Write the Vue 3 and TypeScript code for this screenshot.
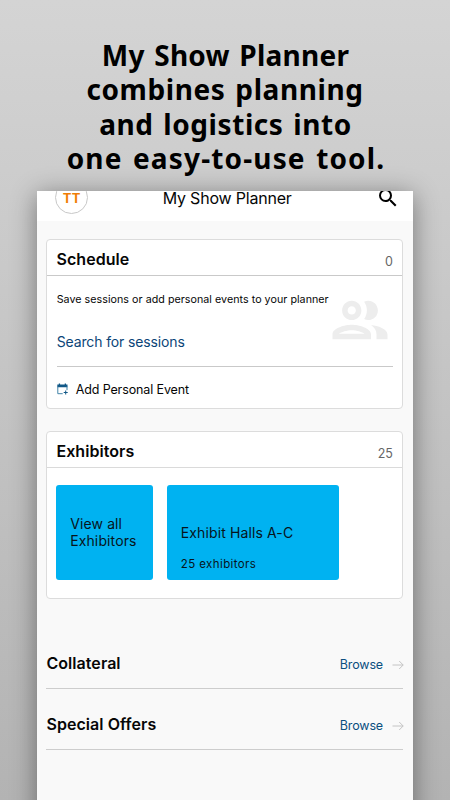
<script setup lang="ts">
interface LinkRow {
  title: string
  action: string
}

const headline: string[] = [
  'My Show Planner',
  'combines planning',
  'and logistics into',
  'one easy-to-use tool.',
]

const rows: LinkRow[] = [
  { title: 'Collateral', action: 'Browse' },
  { title: 'Special Offers', action: 'Browse' },
]
</script>

<template>
  <main class="promo">
    <h1 class="headline">
      <span v-for="(line, i) in headline" :key="line" :class="['line', `line-${i + 1}`]">{{ line }}</span>
    </h1>

    <div class="device">
      <div class="screen">
        <header class="topbar">
          <div class="avatar"><span>TT</span></div>
          <div class="title">My Show Planner</div>
          <svg class="search" viewBox="0 0 24 24" aria-hidden="true">
            <path d="M15.5 14h-.79l-.28-.27A6.471 6.471 0 0 0 16 9.5 6.5 6.5 0 1 0 9.5 16c1.61 0 3.09-.59 4.23-1.57l.27.28v.79l5 4.99L20.49 19l-4.99-5zm-6 0C7.01 14 5 11.99 5 9.5S7.01 5 9.5 5 14 7.01 14 9.5 11.99 14 9.5 14z" />
          </svg>
        </header>

        <section class="card schedule">
          <div class="card-head">
            <h2>Schedule</h2>
            <span class="count">0</span>
          </div>
          <div class="card-body">
            <p class="hint">Save sessions or add personal events to your planner</p>
            <a class="session-link">Search for sessions</a>
            <svg class="people" viewBox="0 0 24 24" aria-hidden="true">
              <path d="M9 13.75c-2.34 0-7 1.17-7 3.5V19h14v-1.75c0-2.33-4.66-3.5-7-3.5zM4.34 17c.84-.58 2.87-1.25 4.66-1.25s3.82.67 4.66 1.25H4.34zM9 12c1.93 0 3.5-1.57 3.5-3.5S10.93 5 9 5 5.5 6.57 5.5 8.5 7.07 12 9 12zm0-5c.83 0 1.5.67 1.5 1.5S9.83 10 9 10s-1.5-.67-1.5-1.5S8.17 7 9 7zm7.04 6.81c1.16.84 1.96 1.96 1.96 3.44V19h4v-1.75c0-2.02-3.5-3.17-5.96-3.44zM15 12c1.93 0 3.5-1.57 3.5-3.5S16.93 5 15 5c-.54 0-1.04.13-1.5.35.63.89 1 1.98 1 3.15s-.37 2.26-1 3.15c.46.22.96.35 1.5.35z" />
            </svg>
            <div class="add-event">
              <svg class="calendar" viewBox="0 0 11 12" aria-hidden="true">
                <path class="cal-fill" d="M.3 1.6h10.2v2.7H.3zM1.8.4h1.3v1.5H1.8zM7.7.4H9v1.5H7.7zM8.2 7.4h1v1.5h1.5v1H9.2v1.5h-1V9.9H6.7v-1h1.5z" />
                <path class="cal-line" d="M.8 3.5v7.2h4.9M10 3.5v3.6" />
              </svg>
              <span>Add Personal Event</span>
            </div>
          </div>
        </section>

        <section class="card exhibitors">
          <div class="card-head">
            <h2>Exhibitors</h2>
            <span class="count">25</span>
          </div>
          <div class="tiles">
            <div class="tile all"><span>View all<br />Exhibitors</span></div>
            <div class="tile hall">
              <span class="hall-name">Exhibit Halls A-C</span>
              <span class="hall-count">25 exhibitors</span>
            </div>
          </div>
        </section>

        <section class="links">
          <div v-for="row in rows" :key="row.title" class="link-row">
            <h2>{{ row.title }}</h2>
            <a>{{ row.action }}</a>
            <svg class="arrow" viewBox="0 0 12 10" aria-hidden="true">
              <path d="M.5 5h10.7M7.2 1l4 4-4 4" />
            </svg>
          </div>
        </section>
      </div>
    </div>
  </main>
</template>

<style>
body {
  margin: 0;
}
</style>

<style scoped>
.promo {
  box-sizing: border-box;
  width: 450px;
  height: 800px;
  overflow: hidden;
  padding-top: 38px;
  background: linear-gradient(#d4d4d4, #b3b3b3);
  font-family: Inter, 'Liberation Sans', sans-serif;
  color: #060606;
}
h1,
h2,
p {
  margin: 0;
}
.headline {
  display: flex;
  flex-direction: column;
  align-items: center;
  height: 153.3px;
  font: 700 28px/34.3px 'Noto Sans', 'Open Sans', sans-serif;
  word-spacing: 2px;
  color: #000;
  white-space: nowrap;
}
.line-1 {
  padding-left: 1px;
  letter-spacing: 0.25px;
}
.line-2 {
  letter-spacing: 0.6px;
}
.line-3 {
  padding-left: 1px;
  letter-spacing: 0.57px;
}
.line-4 {
  padding-left: 2px;
  letter-spacing: 1.15px;
}
.device {
  width: 375.4px;
  height: 640px;
  margin-left: 37.3px;
  box-shadow: 0 4px 24px rgba(0, 0, 0, 0.42);
}
.screen {
  display: flex;
  flex-direction: column;
  height: 100%;
  overflow: hidden;
  background: #f9f9f9;
}
.topbar {
  display: flex;
  flex: none;
  align-items: flex-start;
  justify-content: space-between;
  box-sizing: border-box;
  height: 47.7px;
  padding: 0 12.7px 0 18px;
  background: linear-gradient(#fff 30px, #f9f9f9 30px);
}
.avatar {
  box-sizing: border-box;
  width: 33px;
  height: 33px;
  margin-top: -10.3px;
  border: 1px solid #c8c8c8;
  border-radius: 50%;
  text-align: center;
  font-weight: 700;
  font-size: 13px;
  line-height: 32px;
  letter-spacing: 0.3px;
  color: #f07d05;
}
.title {
  margin-right: 10px;
  font-size: 16px;
  line-height: 14px;
  letter-spacing: -0.2px;
}
.search {
  width: 24px;
  height: 24px;
  margin-top: -5.3px;
}
.card {
  box-sizing: border-box;
  flex: none;
  width: 357px;
  margin-left: 9.2px;
  border: 1px solid #dcdcdc;
  border-radius: 4px;
  background: #fff;
}
.schedule {
  height: 169.7px;
}
.exhibitors {
  height: 168px;
  margin-top: 22.5px;
}
.card-head {
  display: flex;
  align-items: center;
  justify-content: space-between;
  box-sizing: border-box;
  height: 36px;
  padding: 2px 9.5px 0 9px;
  border-bottom: 1px solid #c9c9c9;
}
.card-head h2,
.link-row h2 {
  font-size: 16px;
  line-height: 20px;
  font-weight: 600;
  letter-spacing: 0.05px;
}
.schedule .card-head {
  padding-top: 4px;
}
.exhibitors .card-head {
  border-color: #dadada;
}
.count {
  padding-top: 5px;
  font-size: 12.5px;
  line-height: 16px;
  color: #666;
}
.exhibitors .count {
  padding-top: 6px;
}
.card-body {
  display: grid;
  grid-template-columns: 1fr 66px;
  grid-template-rows: 45px 45px 41px;
  padding: 0 9.2px;
  white-space: nowrap;
}
.hint {
  grid-area: 1 / 1 / 2 / 3;
  padding-top: 17px;
  font-size: 10.7px;
  line-height: 14px;
  letter-spacing: 0.04px;
}
.session-link {
  grid-area: 2 / 1 / 3 / 2;
  padding-top: 11px;
  font-size: 14px;
  line-height: 20px;
  letter-spacing: -0.13px;
  color: #0b4578;
}
.people {
  grid-area: 1 / 2 / 3 / 3;
  width: 66px;
  height: 66px;
  margin: 10.8px 0 0;
  fill: #ededed;
}
.add-event {
  grid-area: 3 / 1 / 4 / 3;
  display: flex;
  align-items: center;
  gap: 8px;
  padding-top: 5px;
  border-top: 1px solid #c9c9c9;
  font-size: 12.5px;
  letter-spacing: -0.12px;
}
.calendar {
  width: 11px;
  height: 12px;
}
.cal-fill {
  fill: #115887;
}
.cal-line {
  fill: none;
  stroke: #4283a8;
  stroke-width: 1;
}
.tiles {
  display: flex;
  gap: 13.5px;
  padding: 16.5px 9px;
}
.tile {
  box-sizing: border-box;
  display: flex;
  flex-direction: column;
  height: 95px;
  border-radius: 3px;
  background: #00b2f1;
  white-space: nowrap;
  color: #07141b;
}
.all {
  width: 97px;
  padding: 30px 0 0 13.7px;
  font-size: 14px;
  line-height: 17.2px;
  letter-spacing: 0.12px;
}
.hall {
  width: 172.3px;
  padding: 38px 0 0 13.8px;
}
.hall-name {
  font-size: 14px;
  line-height: 19px;
  letter-spacing: 0.12px;
}
.hall-count {
  padding-top: 14px;
  font-size: 11.5px;
  line-height: 16px;
  letter-spacing: 0.4px;
}
.links {
  width: 357px;
  margin: 28.2px 0 0 9.2px;
}
.link-row {
  display: flex;
  align-items: flex-end;
  box-sizing: border-box;
  height: 61.3px;
  padding-bottom: 15px;
  border-bottom: 1px solid #cdcdcd;
}
.link-row h2 {
  flex: 1;
}
.link-row a {
  font-size: 12.5px;
  line-height: 17px;
  letter-spacing: -0.15px;
  color: #0b4f80;
}
.arrow {
  width: 12px;
  height: 10px;
  margin: 0 -0.5px 3px 9px;
  fill: none;
  stroke: #c4c4c4;
}
</style>
